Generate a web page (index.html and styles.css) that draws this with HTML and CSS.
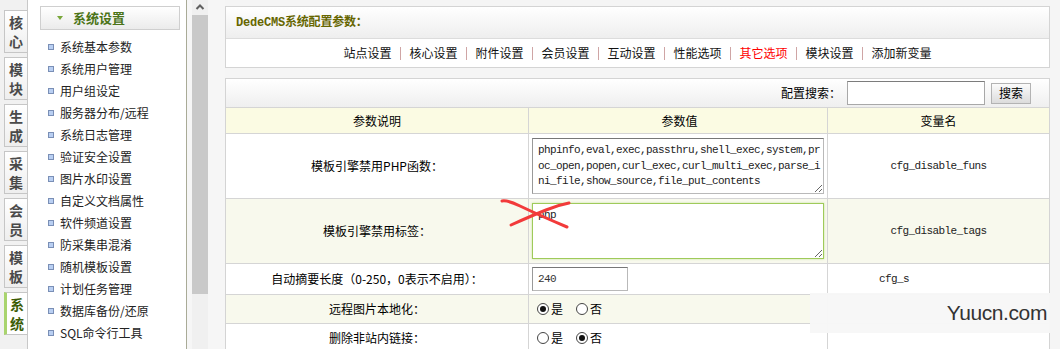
FILE: index.html
```html
<!DOCTYPE html>
<html lang="zh-CN">
<head>
<meta charset="utf-8">
<title>DedeCMS系统配置参数</title>
<link rel="stylesheet" href="styles.css">
</head>
<body>
<div class="page">
  <div class="tabs">
    <div class="tab"><span>核</span><span>心</span></div>
    <div class="tab"><span>模</span><span>块</span></div>
    <div class="tab"><span>生</span><span>成</span></div>
    <div class="tab"><span>采</span><span>集</span></div>
    <div class="tab"><span>会</span><span>员</span></div>
    <div class="tab"><span>模</span><span>板</span></div>
    <div class="tab active"><span>系</span><span>统</span></div>
  </div>

  <div class="menu">
    <div class="menu-head"><span class="tri"></span>系统设置</div>
    <ul class="menu-list">
      <li><i></i>系统基本参数</li>
      <li><i></i>系统用户管理</li>
      <li><i></i>用户组设定</li>
      <li><i></i>服务器分布/远程</li>
      <li><i></i>系统日志管理</li>
      <li><i></i>验证安全设置</li>
      <li><i></i>图片水印设置</li>
      <li><i></i>自定义文档属性</li>
      <li><i></i>软件频道设置</li>
      <li><i></i>防采集串混淆</li>
      <li><i></i>随机模板设置</li>
      <li><i></i>计划任务管理</li>
      <li><i></i>数据库备份/还原</li>
      <li><i></i>SQL命令行工具</li>
    </ul>
  </div>

  <div class="gutter">
    <div class="scroll">
      <div class="arrow">
        <svg width="16" height="15" viewBox="0 0 16 15"><path d="M4.5 9 L8 5.5 L11.5 9" fill="none" stroke="#606060" stroke-width="2"/></svg>
      </div>
      <div class="thumb"></div>
    </div>
  </div>

  <div class="main">
    <div class="box">
      <div class="box-head">DedeCMS系统配置参数：</div>
      <div class="nav">
        <a>站点设置</a><span class="sep"></span>
        <a>核心设置</a><span class="sep"></span>
        <a>附件设置</a><span class="sep"></span>
        <a>会员设置</a><span class="sep"></span>
        <a>互动设置</a><span class="sep"></span>
        <a>性能选项</a><span class="sep"></span>
        <a class="cur">其它选项</a><span class="sep"></span>
        <a>模块设置</a><span class="sep"></span>
        <a>添加新变量</a>
      </div>
    </div>

    <div class="box box2">
      <div class="search">
        <span>配置搜索：</span>
        <input class="search-input" type="text">
        <button class="search-btn">搜索</button>
      </div>

      <div class="row row-head">
        <div class="c1">参数说明</div>
        <div class="c2 center">参数值</div>
        <div class="c3">变量名</div>
      </div>
      <div class="row row-tall">
        <div class="c1">模板引擎禁用PHP函数：</div>
        <div class="c2"><textarea class="ta">phpinfo,eval,exec,passthru,shell_exec,system,proc_open,popen,curl_exec,curl_multi_exec,parse_ini_file,show_source,file_put_contents</textarea></div>
        <div class="c3 mono">cfg_disable_funs</div>
      </div>
      <div class="row row-tall alt">
        <div class="c1">模板引擎禁用标签：</div>
        <div class="c2"><textarea class="ta focus">php</textarea></div>
        <div class="c3 mono">cfg_disable_tags</div>
      </div>
      <div class="row row-mid">
        <div class="c1">自动摘要长度（0-250，0表示不启用）：</div>
        <div class="c2"><input class="txt" type="text" value="240"></div>
        <div class="c3 mono cut">cfg_s</div>
      </div>
      <div class="row row-sm alt">
        <div class="c1">远程图片本地化：</div>
        <div class="c2 radios">
          <label><span class="radio on"></span>是</label>
          <label><span class="radio"></span>否</label>
        </div>
        <div class="c3"></div>
      </div>
      <div class="row row-sm">
        <div class="c1">删除非站内链接：</div>
        <div class="c2 radios">
          <label><span class="radio"></span>是</label>
          <label><span class="radio on"></span>否</label>
        </div>
        <div class="c3"></div>
      </div>
    </div>
  </div>
</div>

<svg class="cross" width="80" height="42" viewBox="0 0 80 42">
  <path d="M6 6 Q12 5 24 11 Q45 21 71 32" fill="none" stroke="#f23a3a" stroke-width="3" stroke-linecap="round"/>
  <path d="M15 30 Q35 21 50 15 Q62 10 73 8" fill="none" stroke="#f23a3a" stroke-width="3" stroke-linecap="round"/>
</svg>
<div class="watermark">Yuucn.com</div>
</body>
</html>
```

FILE: styles.css
```css
* { box-sizing: border-box; }

html, body {
  margin: 0;
  height: 349px;
  overflow: hidden;
}

body {
  position: relative;
  background: #f5f5f5;
  font: 12px/16px "Noto Sans CJK SC", "Noto Sans", sans-serif;
  color: #000;
}

.page {
  display: flex;
  height: 349px;
}

/* left vertical tabs */
.tabs {
  width: 27px;
  flex: none;
  padding-top: 10px;
  display: flex;
  flex-direction: column;
  gap: 4px;
  background: #f1f1f1;
}

.tab {
  margin-left: 4px;
  width: 23px;
  height: 43px;
  border: 1px solid #c6c6c6;
  border-right: 0;
  background: linear-gradient(#ffffff, #eeeeee);
  display: flex;
  flex-direction: column;
  align-items: center;
  justify-content: center;
  font-size: 14px;
  line-height: 19px;
  font-weight: bold;
  color: #4a4a4a;
}

.tab.active {
  background: #fff;
  border-left: 3px solid #a9d46e;
  color: #3c5c06;
}

/* menu */
.menu {
  width: 160px;
  flex: none;
  background: #fff;
  border-left: 1px solid #c8c8c8;
  border-right: 1px solid #a9ab97;
}

.menu-head {
  margin: 6px 6px 0 12px;
  height: 24px;
  border: 1px solid #cfcfcf;
  background: linear-gradient(#ffffff, #ebebeb);
  display: flex;
  align-items: center;
  padding-left: 16px;
  font-size: 13px;
  font-weight: bold;
  color: #4c7418;
}

.tri {
  width: 0;
  height: 0;
  border-left: 3px solid transparent;
  border-right: 3px solid transparent;
  border-top: 4px solid #79a73a;
  margin-right: 10px;
}

.menu-list {
  list-style: none;
  margin: 6px 0 0;
  padding: 0;
}

.menu-list li {
  height: 22px;
  display: flex;
  align-items: center;
  padding-left: 20px;
  color: #222;
  white-space: nowrap;
}

.menu-list li i {
  width: 6px;
  height: 6px;
  border: 1px solid #7a8fb6;
  background: #b9cff2;
  margin-right: 6px;
  flex: none;
}

/* iframe scrollbar */
.gutter {
  width: 38px;
  flex: none;
  padding-left: 5px;
  background: #f6f6f6;
}

.scroll {
  width: 16px;
  height: 349px;
  background: #f0f0f0;
}

.arrow {
  height: 15px;
}

.arrow svg { display: block; }

.thumb {
  height: 279px;
  background: #c9c9c9;
}

/* main */
.main {
  width: 825px;
  flex: none;
  padding-top: 6px;
}

.box {
  border: 1px solid #d4d4d4;
  background: #fff;
}

.box2 {
  margin-top: 10px;
}

.box-head {
  height: 32px;
  border-bottom: 1px solid #dcdcdc;
  background: linear-gradient(#ffffff, #eeeeee);
  display: flex;
  align-items: center;
  padding-left: 10px;
  font-family: "Liberation Mono", "Noto Sans CJK SC", monospace;
  font-size: 12px;
  font-weight: bold;
  color: #666600;
  letter-spacing: -0.2px;
}

.nav {
  height: 28px;
  display: flex;
  justify-content: center;
  align-items: center;
  font-size: 12px;
}

.nav a {
  color: #111;
  white-space: nowrap;
}

.nav a.cur { color: #ff0000; }

.sep {
  width: 1px;
  height: 13px;
  background: #cfa5a5;
  margin: 0 8.5px;
}

.search {
  height: 28px;
  display: flex;
  justify-content: flex-end;
  align-items: center;
  padding-right: 18px;
  background: linear-gradient(#ffffff, #efefef);
}

.search-input {
  margin: 0 0 0 6px;
  width: 138px;
  height: 24px;
  border: 1px solid #a8a8a8;
  border-top-color: #7c7c7c;
  background: #fff;
  padding: 0;
}

.search-btn {
  margin-left: 6px;
  width: 40px;
  height: 21px;
  padding: 0;
  border: 1px solid #b3b3b3;
  background: linear-gradient(#fbfbfb, #dcdcdc);
  font: 12px/16px "Noto Sans CJK SC", sans-serif;
  color: #000;
}

/* table rows */
.row {
  display: grid;
  grid-template-columns: 302px 299px 222px;
  border-top: 1px solid #d5d5d5;
}

.row > div {
  display: flex;
  align-items: center;
}

.c1, .c3 { justify-content: center; }
.c2.center { justify-content: center; }

.c2, .c3 { border-left: 1px solid #d5d5d5; }

.c2 { padding-left: 3px; }

.row-head { height: 26px; background: #fbfbe3; }
.row-tall { height: 65px; }
.row-mid { height: 31px; }
.row-sm { height: 29px; }
.alt { background: #f8f9ed; }

.mono {
  font-family: "Liberation Mono", monospace;
  font-size: 11px;
  letter-spacing: -0.6px;
  color: #222;
}

.c3.cut {
  justify-content: flex-start;
  padding-left: 51px;
}

.ta {
  width: 292px;
  height: 56px;
  margin: 0;
  padding: 4px 0 0 5px;
  border: 1px solid #b9b9b9;
  border-top-color: #777;
  border-left-color: #999;
  background: #fff;
  font-family: "Liberation Mono", monospace;
  font-size: 11px;
  letter-spacing: -0.6px;
  line-height: 15.5px;
  color: #222;
  word-break: break-all;
  overflow: hidden;
}

.ta.focus {
  border: 1px solid #9fca5a;
  box-shadow: 0 0 2px #c5e09b;
}

.txt {
  width: 96px;
  height: 24px;
  margin: 0;
  padding: 0 0 0 5px;
  border: 1px solid #b9b9b9;
  border-top-color: #777;
  border-left-color: #999;
  font-family: "Liberation Mono", monospace;
  font-size: 11px;
  letter-spacing: -0.6px;
  color: #333;
}

.radios {
  padding-left: 8px !important;
  gap: 13px;
}

.radios label {
  display: flex;
  align-items: center;
  gap: 2px;
}

.radio {
  width: 12px;
  height: 12px;
  border: 1px solid #444;
  border-radius: 50%;
  background: #fff;
  display: flex;
  align-items: center;
  justify-content: center;
}

.radio.on::after {
  content: "";
  width: 6px;
  height: 6px;
  border-radius: 50%;
  background: #111;
}

/* overlays */
.cross {
  position: absolute;
  left: 496px;
  top: 195px;
}

.watermark {
  position: absolute;
  left: 810px;
  top: 293px;
  width: 240px;
  height: 40px;
  background: rgba(247, 247, 247, 0.96);
  display: flex;
  align-items: center;
  justify-content: flex-end;
  padding-right: 3px;
  font-family: "Liberation Sans", Arial, sans-serif;
  font-size: 21px;
  letter-spacing: -0.4px;
  color: #333;
}
```
